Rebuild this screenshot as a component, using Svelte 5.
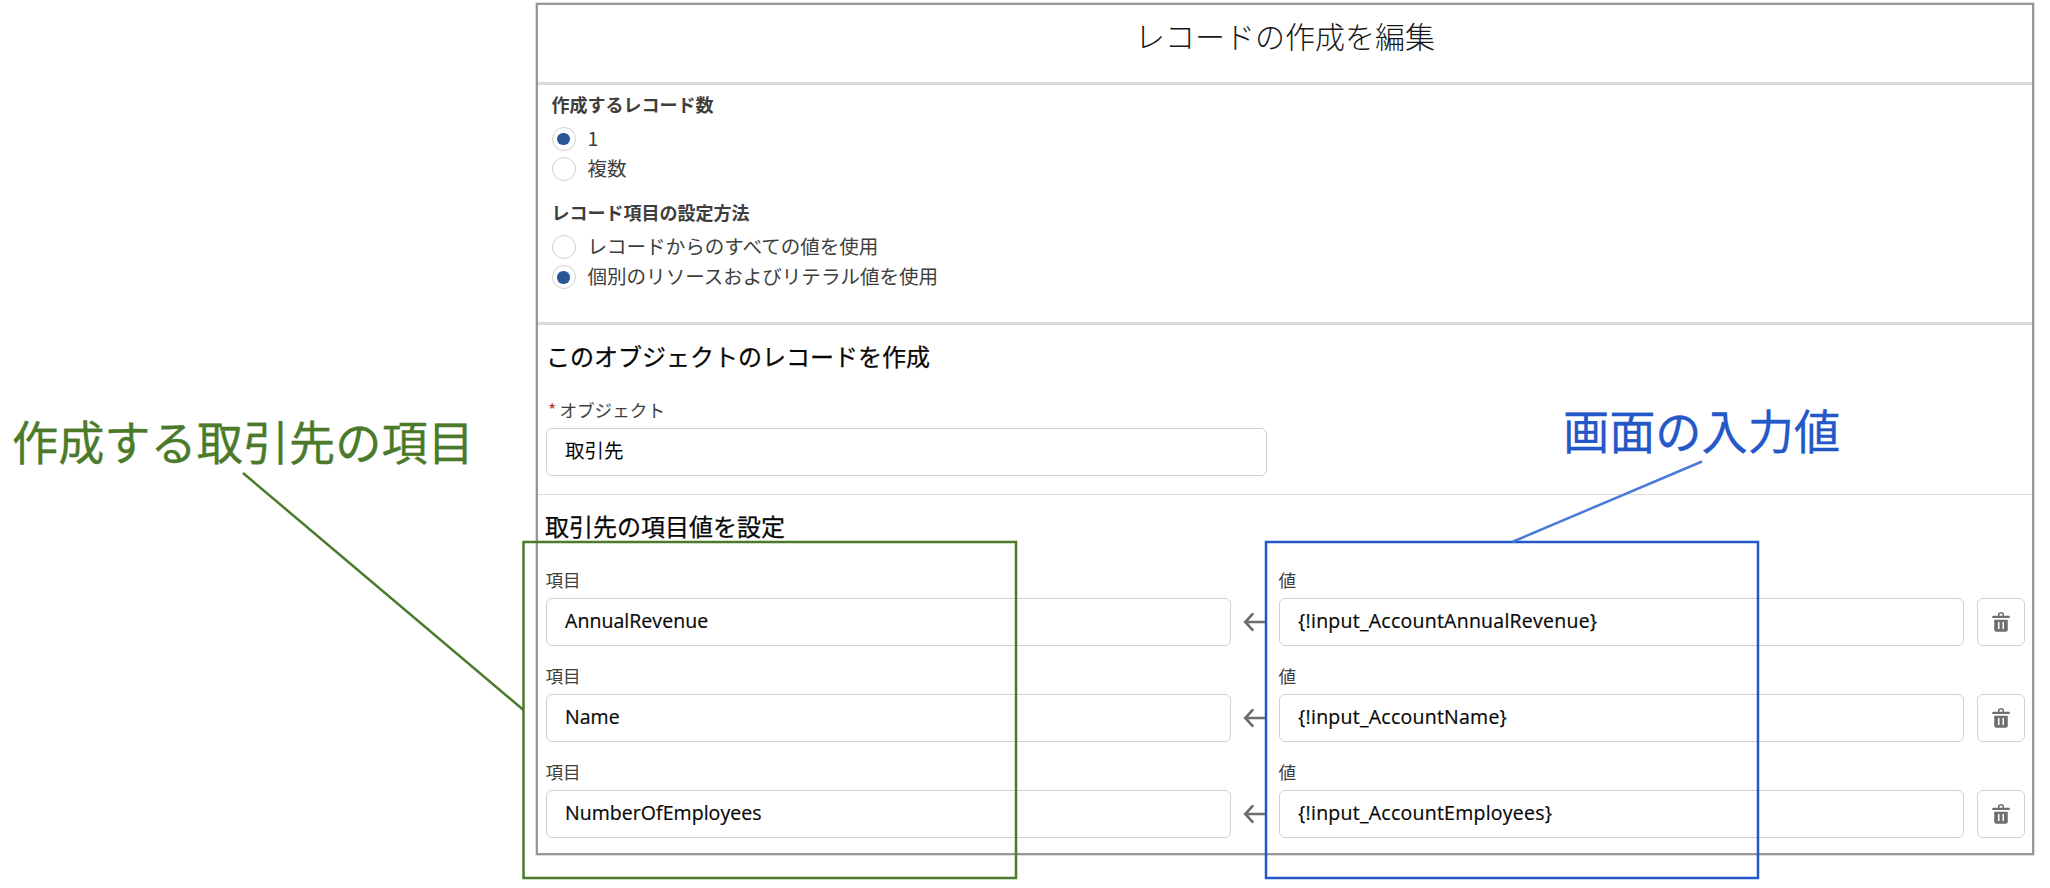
<script>
  const groups = [
    {
      legend: '作成するレコード数',
      options: [
        { label: '1', checked: true },
        { label: '複数', checked: false }
      ]
    },
    {
      legend: 'レコード項目の設定方法',
      options: [
        { label: 'レコードからのすべての値を使用', checked: false },
        { label: '個別のリソースおよびリテラル値を使用', checked: true }
      ]
    }
  ];
  const rows = [
    { field: 'AnnualRevenue', value: '{!input_AccountAnnualRevenue}' },
    { field: 'Name', value: '{!input_AccountName}' },
    { field: 'NumberOfEmployees', value: '{!input_AccountEmployees}' }
  ];
</script>

<div class="page">
  <main class="panel">
    <header><h1>レコードの作成を編集</h1></header>

    <section class="choices">
      {#each groups as g}
        <div class="group">
          <div class="legend">{g.legend}</div>
          {#each g.options as o}
            <div class="option">
              <span class="radio" class:checked={o.checked}></span>
              <span class="option-label">{o.label}</span>
            </div>
          {/each}
        </div>
      {/each}
    </section>

    <section class="object">
      <h2>このオブジェクトのレコードを作成</h2>
      <div class="label"><span class="req">*</span>オブジェクト</div>
      <div class="input">取引先</div>
    </section>

    <section class="values">
      <h2>取引先の項目値を設定</h2>
      {#each rows as r}
        <div class="row">
          <div class="cell">
            <div class="label">項目</div>
            <div class="input latin">{r.field}</div>
          </div>
          <svg class="arrow" width="24" height="20" viewBox="0 0 24 20">
            <path d="M24 10H2.5M9.5 2.2L2.3 10l7.2 7.8" />
          </svg>
          <div class="cell">
            <div class="label">値</div>
            <div class="input latin resource">{r.value}</div>
          </div>
          <div class="trash">
            <svg width="18" height="20" viewBox="0 0 18 20">
              <path fill-rule="evenodd" d="M.8 3.7H6V2.300Q6 .3 8 .3h2.200Q12 .3 12 2.300v1.400h5.200q.5 0 .5.500v1.200q0 .5-.5.500H.8q-.5 0-.5-.5V4.200q0-.5.5-.5zM7.500 3.700h3V2.600q0-.8-.8-.8H8.300q-.8 0-.8.8zM2.700 7.800h12.600q.5 0 .5.500v9.400q0 2-2 2H4.200q-2 0-2-2V8.300q0-.5.500-.5zM6 10v7.100h1.500V10zM10.500 10v7.100H12V10z" />
            </svg>
          </div>
        </div>
      {/each}
    </section>
  </main>

  <svg class="lines" width="2050" height="888" viewBox="0 0 2050 888">
    <g stroke="#4b7a2b">
      <rect x="523.500" y="542" width="492.500" height="336" />
      <path d="M243 473L523.500 710" />
    </g>
    <g stroke="#2457c8">
      <rect x="1266" y="542" width="492" height="336" />
      <path class="soft" d="M1702 461.500L1512 542" />
    </g>
  </svg>
  <div class="note green">作成する取引先の項目</div>
  <div class="note blue">画面の入力値</div>
</div>

<style>
  :global(body) { background: #fff; }
  .page {
    position: relative;
    width: 2050px;
    height: 888px;
    overflow: hidden;
    padding: 3px 0 0 536px;
    box-sizing: border-box;
    font-family: 'Noto Sans CJK JP', sans-serif;
    color: #3e3e3c;
  }
  .panel {
    box-sizing: border-box;
    width: 1498px;
    height: 852px;
    border: 2px solid #979797;
    box-shadow: 0 0 0 0.500px #bbb;
  }
  header {
    height: 77px;
    border-bottom: 3px solid #dddbda;
  }
  h1 {
    margin: 0;
    padding-top: 10px;
    text-align: center;
    font-size: 30px;
    line-height: 40px;
    font-weight: 300;
    color: #181818;
  }
  .choices {
    box-sizing: border-box;
    height: 240px;
    padding: 7px 0 0 13.500px;
    border-bottom: 3px solid #dddbda;
  }
  .group { height: 108.300px; }
  .legend {
    height: 35px;
    font-size: 18px;
    line-height: 24px;
    font-weight: 700;
  }
  .option {
    display: flex;
    align-items: center;
    gap: 12px;
    height: 24px;
    margin-bottom: 6px;
  }
  .radio {
    box-sizing: border-box;
    display: grid;
    place-items: center;
    width: 24px;
    height: 24px;
    border: 1px solid #d3d1d0;
    border-radius: 50%;
  }
  .checked::before {
    content: '';
    width: 12.500px;
    height: 12.500px;
    border-radius: 50%;
    background: #2a5597;
  }
  .option-label {
    font-size: 19.550px;
    line-height: 24px;
    margin-top: -3px;
  }
  .group:nth-child(2) .option-label { margin-top: -1.800px; }
  h2 {
    margin: 0;
    font-size: 24px;
    line-height: 32px;
    font-weight: 400;
    -webkit-text-stroke: 0.250px #080707;
    color: #080707;
  }
  .object {
    box-sizing: border-box;
    height: 170px;
    padding: 15px 0 0 8px;
    border-bottom: 1px solid #dddbda;
  }
  .object .label { margin-top: 25px; padding-left: 2px; }
  .object .input { width: 721px; line-height: 41px; }
  .label {
    font-size: 17.600px;
    line-height: 26px;
    height: 31px;
  }
  .req { color: #c23934; font-size: 18px; line-height: 20px; margin-right: 3px; }
  .input {
    box-sizing: border-box;
    height: 48px;
    padding: 0 18px;
    border: 1px solid #d3d1d0;
    border-radius: 6px;
    font-size: 19.500px;
    line-height: 43px;
    color: #080707;
    white-space: nowrap;
  }
  .latin {
    font-family: 'Open Sans', 'Noto Sans', sans-serif;
    letter-spacing: 0.050px;
    -webkit-text-stroke: 0.200px #080707;
  }
  .resource { letter-spacing: 0.250px; }
  .values { padding: 15px 7px 0 8px; }
  .values h2 { margin: 0 0 24.700px -1px; }
  .values .label { margin-left: -0.500px; }
  .row {
    display: flex;
    align-items: flex-end;
    height: 79px;
    margin-bottom: 17.300px;
  }
  .cell { width: 685px; }
  .arrow { margin: 0 12px 14px 12px; }
  .arrow path { fill: none; stroke: #706e6b; stroke-width: 2.700; stroke-linecap: round; }
  .trash {
    box-sizing: border-box;
    display: grid;
    place-items: center;
    width: 48px;
    height: 48px;
    margin-left: 12.500px;
    border: 1px solid #d3d1d0;
    border-radius: 6px;
    fill: #706e6b;
  }
  .lines { position: absolute; left: 0; top: 0; fill: none; stroke-width: 2.500; }
  .soft { stroke: #4a7bd8; }
  .note {
    position: absolute;
    font-size: 46.200px;
    line-height: 60px;
    white-space: nowrap;
  }
  .green { left: 12px; top: 410px; color: #4b7a2b; -webkit-text-stroke: 0.300px #4b7a2b; }
  .blue { left: 1563px; top: 399px; color: #2457c8; -webkit-text-stroke: 0.300px #2457c8; }
</style>
